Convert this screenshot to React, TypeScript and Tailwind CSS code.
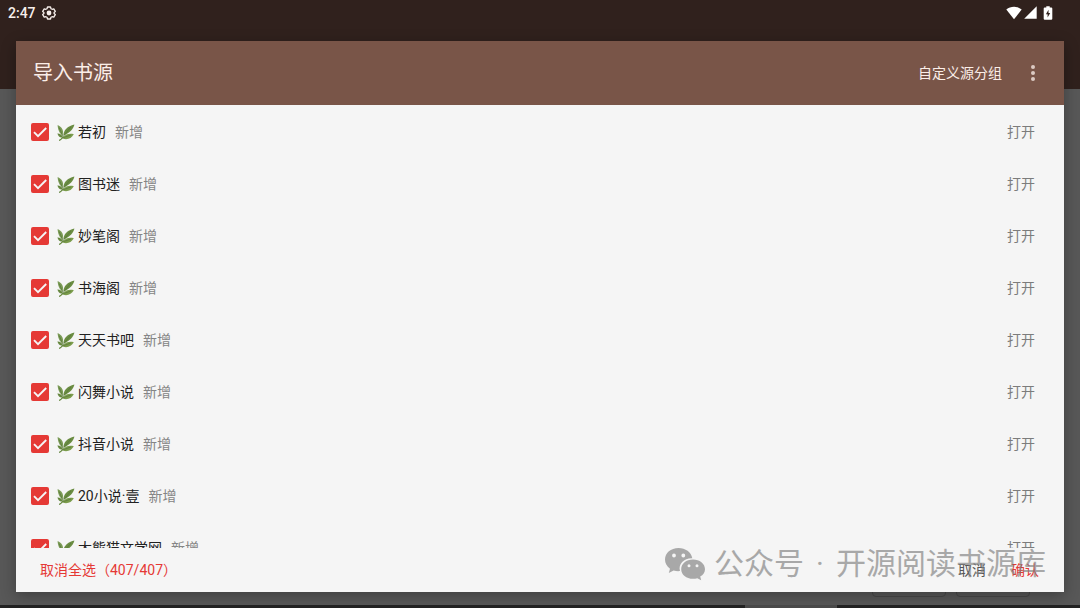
import { useState } from "react";

const SOURCES = [
  "若初",
  "图书迷",
  "妙笔阁",
  "书海阁",
  "天天书吧",
  "闪舞小说",
  "抖音小说",
  "20小说·壹",
  "大熊猫文学网",
];

const TOTAL = 407;

function Leaf() {
  return (
    <svg viewBox="0 0 18 18" className="h-[18px] w-[18px]" aria-hidden="true">
      <path d="M.6 2C3.800 3.200 5.900 5.800 6.100 9L5.500 12.400C2.800 10.800.8 7 .6 2Z" fill="#7a9a55" />
      <path d="M6.400 11.800C6.600 7.400 10.200 3 17.400 1.400C16.400 5.800 12.800 9.800 6.600 12.400Z" fill="#6a8c42" />
      <path d="M6.300 14C8.500 11.200 12.600 10 16.800 11.200C14.600 15.200 10.500 17.200 5.800 15.600Z" fill="#7b9c4c" />
      <path d="M.4 10.600C2.800 10.400 4.800 11.800 5.800 14.200C3.600 15.400 1.400 13.800.4 10.600Z" fill="#66873f" />
      <path d="M2.600 17.200C4.200 16.600 5.200 15.300 6.200 13.600L13.500 4.400M5.900 14.800L13.500 12.200M5.800 13L2.300 5" fill="none" stroke="#567638" strokeWidth=".7" strokeLinecap="round" />
      <path d="M2.600 17.200C4 16.600 5 15.600 6 14" fill="none" stroke="#688a40" strokeWidth="1.200" strokeLinecap="round" />
    </svg>
  );
}

function StatusBar() {
  return (
    <div className="flex h-[25px] items-center justify-between pr-[27px] pl-2 text-[#f7efec]">
      <div className="flex items-center gap-1.5">
        <span className="text-[14px] leading-5 font-medium">2:47</span>
        <svg viewBox="0 0 14 14" className="h-3.5 w-3.5" aria-hidden="true">
          <path
            d="M5.500 1H8.500L9 2.700L10.100 3.300L11.800 2.900L13.300 5.400L12.100 6.400V7.600L13.300 8.600L11.800 11.100L10.100 10.700L9 11.300L8.500 13H5.500L5 11.300L3.900 10.700L2.200 11.100L.7 8.600L1.900 7.600V6.400L.7 5.400L2.200 2.900L3.900 3.300L5 2.700Z"
            fill="none"
            stroke="currentColor"
            strokeWidth="1.300"
            strokeLinejoin="round"
          />
          <circle cx="7" cy="7" r="2.400" fill="currentColor" />
        </svg>
      </div>
      <div className="flex items-center gap-0.5 text-white">
        <svg viewBox="0 0 16 14" className="h-3.5 w-4" aria-hidden="true">
          <path d="M.3 3.500C4.500-.2 11.500-.2 15.700 3.500L8 13.200Z" fill="currentColor" />
        </svg>
        <svg viewBox="0 0 13 13" className="h-[13px] w-[13px]" aria-hidden="true">
          <path d="M12.700.3V12.800H.2Z" fill="currentColor" />
        </svg>
        <svg viewBox="0 0 10 14" className="ml-1 h-3.5 w-2.5" aria-hidden="true">
          <path d="M3.300.3H6.700V1.500H8.200Q9.300 1.500 9.300 2.600V12.700Q9.300 13.700 8.200 13.700H1.800Q.7 13.700.7 12.700V2.600Q.7 1.500 1.800 1.500H3.300Z" fill="currentColor" />
          <path d="M5.500 3.800L2.900 8.200H4.600V11.400L7.200 7H5.500Z" fill="#30211d" />
        </svg>
      </div>
    </div>
  );
}

// Dimmed page that stays visible around the dialog
function Backdrop() {
  return (
    <div className="absolute inset-0 -z-10 flex flex-col" aria-hidden="true">
      <div className="h-[89px] bg-[#30211d]" />
      <div className="flex flex-1 items-end justify-end gap-2.5 bg-[#585858] pr-[50px] pb-2">
        <div className="h-9 w-[74px] rounded-sm border border-[#474747]" />
        <div className="h-9 w-[74px] rounded-sm border border-[#474747]" />
      </div>
      <div className="flex h-[3px] justify-end bg-[#222] pr-[243px]">
        <div className="w-[92px] bg-[#4b4b4b]" />
      </div>
    </div>
  );
}

function Watermark() {
  return (
    <div className="pointer-events-none absolute right-[34px] bottom-6 flex h-10 items-center gap-2 text-[#808080] opacity-65">
      <svg viewBox="0 0 42 34" className="h-[34px] w-[42px]" aria-hidden="true">
        <path
          fillRule="evenodd"
          fill="currentColor"
          d="M14.500 1C6.800 1 1 6 1 12.600C1 16.300 2.800 19.500 6 21.700L4.800 26L9.600 23.500C11.700 24.100 13.700 24.300 16 24.100C13.900 16.800 20.500 10.900 28.300 11.300C27.200 5.200 21.500 1 14.500 1ZM10 6.600A1.900 1.900 0 1 1 10 10.400A1.900 1.900 0 1 1 10 6.600ZM19.300 6.600A1.900 1.900 0 1 1 19.300 10.400A1.900 1.900 0 1 1 19.300 6.600Z"
        />
        <path
          fillRule="evenodd"
          fill="currentColor"
          d="M29 12.500C22.300 12.500 17.200 16.700 17.200 22.200C17.200 27.700 22.300 31.800 29 31.800C30.600 31.800 32 31.600 33.300 31.200L37.200 33.200L36.200 29.600C39.200 27.800 41 25.200 41 22.200C41 16.700 35.600 12.500 29 12.500ZM25 17.300A1.500 1.500 0 1 1 25 20.300A1.500 1.500 0 1 1 25 17.300ZM33 17.300A1.500 1.500 0 1 1 33 20.300A1.500 1.500 0 1 1 33 17.300Z"
        />
      </svg>
      <div className="flex text-[30px] leading-10">
        <span>公众号</span>
        <span className="w-8 text-center">·</span>
        <span>开源阅读书源库</span>
      </div>
    </div>
  );
}

type SourceRowProps = {
  name: string;
  checked: boolean;
  onToggle: () => void;
};

function SourceRow({ name, checked, onToggle }: SourceRowProps) {
  return (
    <li className="flex h-[52px] shrink-0 items-center justify-between pr-[29px] pl-[15px]">
      <label className="flex items-center">
        <span className="grid h-[18px] w-[18px]">
          <input
            type="checkbox"
            checked={checked}
            onChange={onToggle}
            className="peer col-start-1 row-start-1 h-[18px] w-[18px] appearance-none rounded-xs border-2 border-[#757575] checked:border-[#e53935] checked:bg-[#e53935]"
          />
          <svg viewBox="0 0 18 18" className="pointer-events-none invisible col-start-1 row-start-1 peer-checked:visible" aria-hidden="true">
            <path d="M3 9.200L7 13.200L15.200 5" fill="none" stroke="#f5f5f5" strokeWidth="1.900" />
          </svg>
        </span>
        <span className="flex items-center gap-[3px] pl-2 text-[#212121]">
          <Leaf />
          {name}
        </span>
        <span className="pl-[9px] text-[#858585]">新增</span>
      </label>
      <button type="button" className="text-[#7c7c7c]">打开</button>
    </li>
  );
}

export default function App() {
  const [unchecked, setUnchecked] = useState<string[]>([]);

  const toggle = (name: string) => {
    setUnchecked(prev => (prev.includes(name) ? prev.filter(n => n !== name) : [...prev, name]));
  };

  return (
    <div className="relative isolate flex h-screen flex-col overflow-hidden font-[Roboto,'Noto_Sans_CJK_SC',sans-serif] text-[14px] leading-5">
      <Backdrop />
      <StatusBar />

      {/* Import dialog */}
      <main className="mx-4 mt-4 mb-4 flex min-h-0 flex-1 flex-col bg-[#f5f5f5] shadow-[0_4px_14px_rgba(0,0,0,0.3)]">
        <header className="flex h-16 shrink-0 items-center justify-between bg-[#795548] pr-5 pl-[17px] text-[#fbeee8]">
          <h1 className="text-[20px] leading-7">导入书源</h1>
          <div className="flex items-center gap-5">
            <button type="button">自定义源分组</button>
            <button type="button" aria-label="更多选项" className="text-[#dccac3]">
              <svg viewBox="0 0 22 22" className="h-[22px] w-[22px]" fill="currentColor" aria-hidden="true">
                <circle cx="11" cy="5" r="2" />
                <circle cx="11" cy="11" r="2" />
                <circle cx="11" cy="17" r="2" />
              </svg>
            </button>
          </div>
        </header>

        <ul className="flex min-h-0 flex-1 flex-col overflow-hidden pt-px">
          {SOURCES.map(name => (
            <SourceRow
              key={name}
              name={name}
              checked={!unchecked.includes(name)}
              onToggle={() => toggle(name)}
            />
          ))}
        </ul>

        <footer className="flex h-11 shrink-0 items-center justify-between pr-[25px] pl-6 text-[#e53935]">
          <button type="button" onClick={() => setUnchecked(unchecked.length ? [] : SOURCES)}>
            取消全选（{TOTAL - unchecked.length}/{TOTAL}）
          </button>
          <div className="flex gap-[25px]">
            <button type="button" className="text-[#555]">取消</button>
            <button type="button">确认</button>
          </div>
        </footer>
      </main>

      <Watermark />
    </div>
  );
}
